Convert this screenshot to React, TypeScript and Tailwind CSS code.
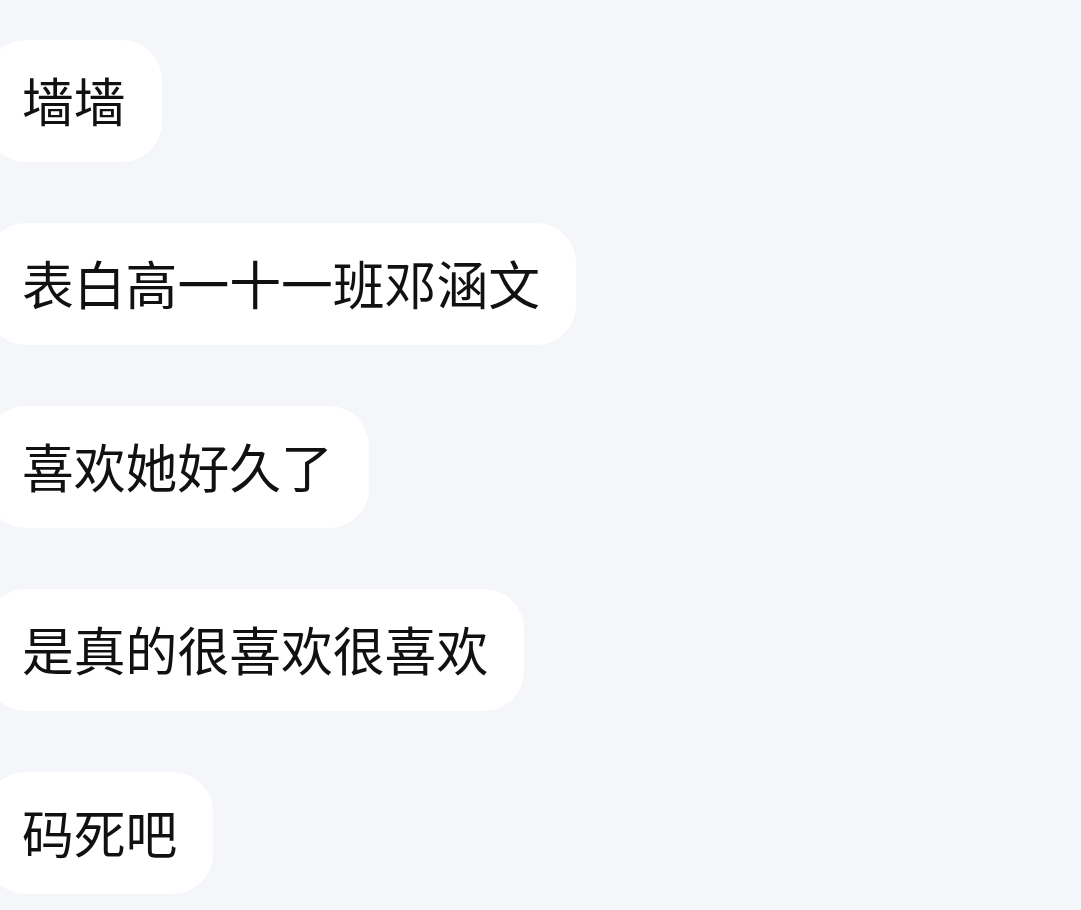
import React from 'react';

const messages = ['墙墙', '表白高一十一班邓涵文', '喜欢她好久了', '是真的很喜欢很喜欢', '码死吧'];

export default function App() {
	return (
		<div
			className="w-[1081px] h-[910px] overflow-hidden bg-[#f5f6fa] flex flex-col items-start gap-[61px] pt-[40px]"
			style={{ fontFamily: '"Noto Sans CJK SC", "Noto Sans", sans-serif' }}
		>
			{messages.map((m) => (
				<div
					key={m}
					className="ml-[-14px] h-[122px] flex items-center pl-[36px] pr-[36px] pb-[2px] bg-white rounded-[40px] text-[51.8px] leading-none text-[#111111]"
				>
					{m}
				</div>
			))}
		</div>
	);
}
